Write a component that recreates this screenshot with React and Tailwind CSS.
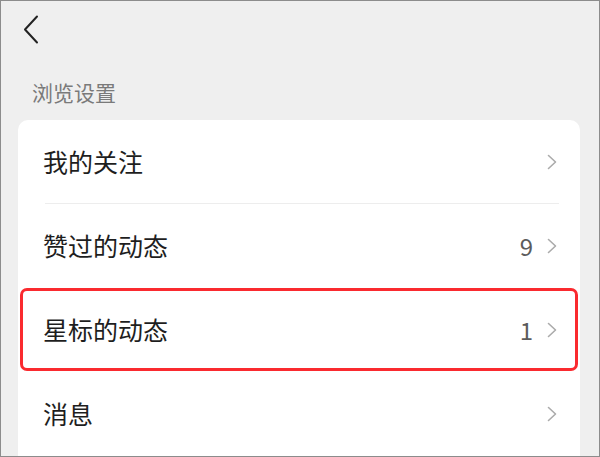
const rows = [
  { label: "我的关注" },
  { label: "赞过的动态", count: "9" },
  { label: "星标的动态", count: "1", marked: true },
  { label: "消息" },
];

function Chevron() {
  return (
    <svg width="10" height="16" viewBox="0 0 10 16" fill="none">
      <path d="M1.5 1.5 L8.5 8 L1.5 14.5" stroke="#ababab" strokeWidth="1.6" strokeLinecap="round" strokeLinejoin="round" />
    </svg>
  );
}

export default function App() {
  return (
    <div
      className="w-[600px] h-[457px] overflow-hidden bg-[#efefef] border border-[#8c8c8c]"
      style={{ fontFamily: '"Noto Sans CJK SC", "Noto Sans", sans-serif' }}
    >
      <div className="h-[57px] pl-[21px] pt-[14px]">
        <svg width="18" height="30" viewBox="0 0 18 30" fill="none">
          <path d="M15 1.5 L3 14.5 L15 27.5" stroke="#222" strokeWidth="2" strokeLinecap="round" strokeLinejoin="round" />
        </svg>
      </div>
      <div className="pl-[31px] pt-[20px] pb-[14px] text-[21px] leading-[28px] text-[#7a7a7a]">浏览设置</div>
      <div className="ml-[17px] mr-[19px] pb-[40px] bg-white rounded-[10px]">
        {rows.map((row, i) => (
          <div key={row.label}>
            {i === 1 && <div className="h-px ml-[27px] mr-[21px] bg-[#ededed]" />}
            {i > 1 && <div className="h-px" />}
            <div className="relative h-[83px] flex items-center pl-[25px] pr-[23px]">
              <span className="flex-1 text-[25px] text-[#1e1e1e]">{row.label}</span>
              {row.count && <span className="mr-[14px] text-[24px] text-[#5c5c5c]">{row.count}</span>}
              <Chevron />
              {row.marked && (
                <div className="absolute top-0 bottom-0 left-[2px] right-[2px] border-[3px] border-[#fa2a2f] rounded-[7px]" />
              )}
            </div>
          </div>
        ))}
      </div>
    </div>
  );
}
